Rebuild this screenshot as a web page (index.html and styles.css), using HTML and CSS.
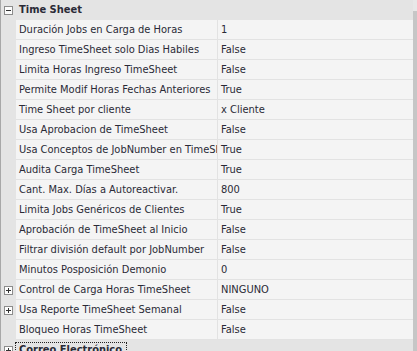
FILE: index.html
```html
<!DOCTYPE html>
<html lang="es">
<head>
    <meta charset="UTF-8">
    <title>Time Sheet</title>
    <link rel="stylesheet" href="styles.css">
</head>
<body>
    <div class="grid-frame">
        <div class="property-grid">
            <div class="category">
                <span class="gutter"><span class="toggle"></span></span>
                <span class="category-label">Time Sheet</span>
            </div>
            <div class="prop-row"><span class="gutter"></span><span class="prop-name">Duración Jobs en Carga de Horas</span><span class="prop-value">1</span></div>
            <div class="prop-row"><span class="gutter"></span><span class="prop-name">Ingreso TimeSheet solo Dias Habiles</span><span class="prop-value">False</span></div>
            <div class="prop-row"><span class="gutter"></span><span class="prop-name">Limita Horas Ingreso TimeSheet</span><span class="prop-value">False</span></div>
            <div class="prop-row"><span class="gutter"></span><span class="prop-name">Permite Modif Horas Fechas Anteriores</span><span class="prop-value">True</span></div>
            <div class="prop-row"><span class="gutter"></span><span class="prop-name">Time Sheet por cliente</span><span class="prop-value">x Cliente</span></div>
            <div class="prop-row"><span class="gutter"></span><span class="prop-name">Usa Aprobacion de TimeSheet</span><span class="prop-value">False</span></div>
            <div class="prop-row"><span class="gutter"></span><span class="prop-name">Usa Conceptos de JobNumber en TimeSheet</span><span class="prop-value">True</span></div>
            <div class="prop-row"><span class="gutter"></span><span class="prop-name">Audita Carga TimeSheet</span><span class="prop-value">True</span></div>
            <div class="prop-row"><span class="gutter"></span><span class="prop-name">Cant. Max. Días a Autoreactivar.</span><span class="prop-value">800</span></div>
            <div class="prop-row"><span class="gutter"></span><span class="prop-name">Limita Jobs Genéricos de Clientes</span><span class="prop-value">True</span></div>
            <div class="prop-row"><span class="gutter"></span><span class="prop-name">Aprobación de TimeSheet al Inicio</span><span class="prop-value">False</span></div>
            <div class="prop-row"><span class="gutter"></span><span class="prop-name">Filtrar división default por JobNumber</span><span class="prop-value">False</span></div>
            <div class="prop-row"><span class="gutter"></span><span class="prop-name">Minutos Posposición Demonio</span><span class="prop-value">0</span></div>
            <div class="prop-row"><span class="gutter"><span class="toggle closed"></span></span><span class="prop-name">Control de Carga Horas TimeSheet</span><span class="prop-value">NINGUNO</span></div>
            <div class="prop-row"><span class="gutter"><span class="toggle closed"></span></span><span class="prop-name">Usa Reporte TimeSheet Semanal</span><span class="prop-value">False</span></div>
            <div class="prop-row"><span class="gutter"></span><span class="prop-name">Bloqueo Horas TimeSheet</span><span class="prop-value">False</span></div>
            <div class="category">
                <span class="gutter"><span class="toggle closed"></span></span>
                <span class="category-label focused">Correo Electrónico</span>
            </div>
        </div>
        <div class="scrollbar"><div class="thumb"></div></div>
    </div>
</body>
</html>
```
FILE: styles.css
```css
body {
    margin: 0;
    width: 417px;
    height: 351px;
    overflow: hidden;
    font-family: 'DejaVu Sans Condensed', 'DejaVu Sans', sans-serif;
    font-size: 11px;
    color: #2a2a36;
    background: #f4f4f4;
}

.grid-frame {
    display: flex;
    height: 351px;
    border-left: 1px solid #a8a8a8;
}

.property-grid {
    flex: 1;
    display: flex;
    flex-direction: column;
    overflow: hidden;
}

.category {
    display: flex;
    align-items: center;
    height: 20px;
    flex-shrink: 0;
    background: #e4e4e4;
}

.category-label {
    font-weight: bold;
    padding-left: 3px;
    line-height: 14px;
}

.category-label.focused {
    outline: 1px dotted #222;
    padding-right: 4px;
}

.prop-row {
    display: flex;
    height: 19px;
    flex-shrink: 0;
    border-bottom: 1px solid #e2e2e2;
    line-height: 19px;
}

.gutter {
    width: 15px;
    flex-shrink: 0;
    display: flex;
    align-items: center;
    justify-content: center;
    align-self: stretch;
    background: #e4e4e4;
}

.prop-row .gutter {
    margin-bottom: -1px;
}

/* expand / collapse box, drawn with two bars */
.toggle {
    position: relative;
    width: 7px;
    height: 7px;
    border: 1px solid #8c8c8c;
    background: #fcfcfc;
}

.toggle::before {
    content: "";
    position: absolute;
    left: 1px;
    top: 3px;
    width: 5px;
    height: 1px;
    background: #333;
}

.toggle.closed::after {
    content: "";
    position: absolute;
    left: 3px;
    top: 1px;
    width: 1px;
    height: 5px;
    background: #333;
}

.prop-name {
    width: 198px;
    flex-shrink: 0;
    padding-left: 3px;
    white-space: nowrap;
    overflow: hidden;
    border-right: 1px solid #e2e2e2;
}

.prop-value {
    flex: 1;
    padding-left: 3px;
    white-space: nowrap;
    overflow: hidden;
}

.scrollbar {
    width: 4px;
    flex-shrink: 0;
    background: #e8e8e8;
    padding-top: 11px;
}

.thumb {
    height: 100%;
    background: #c6c6c6;
}
```
